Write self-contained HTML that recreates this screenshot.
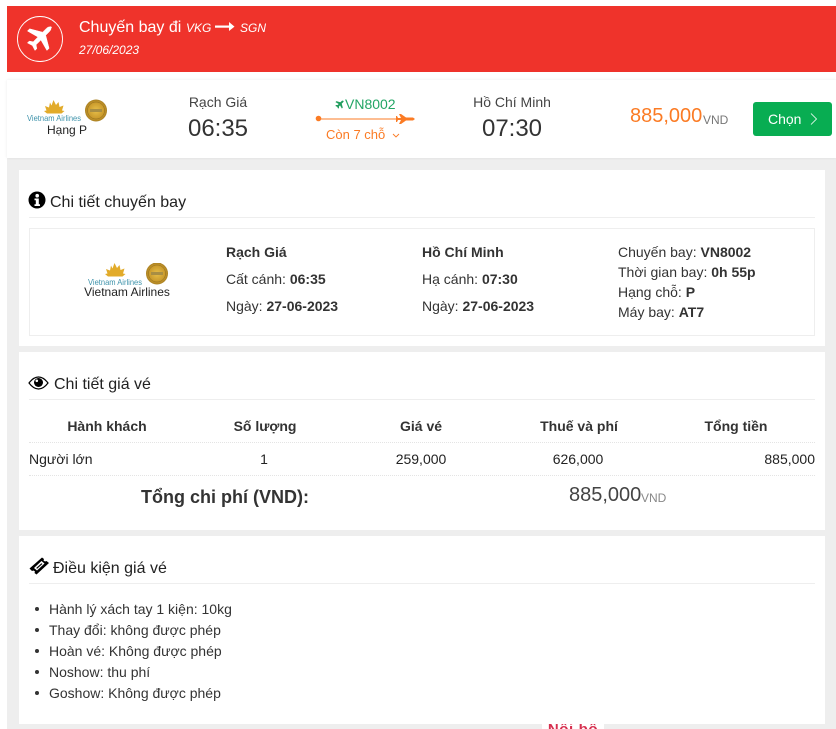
<!DOCTYPE html>
<html><head><meta charset="utf-8">
<style>
html,body{margin:0;padding:0;width:836px;height:729px;overflow:hidden;background:#fff}
body{position:relative;font-family:"Liberation Sans",Arial,sans-serif;color:#333;font-size:14px}
.a{position:absolute}
.t{position:absolute;white-space:nowrap;line-height:20px;height:20px}
.c{transform:translateX(-50%)}
.h{font-size:16px;color:#222}
.l{position:absolute;height:1px;background:#eee;left:29px;width:786px}
.d{position:absolute;left:29px;width:786px;border-top:1px dotted #e4e4e4}
b{color:#333}
</style></head><body>
<div class="a" style="left:7px;top:158px;width:829px;height:571px;background:#eeeeee"></div>
<div class="a" style="left:7px;top:6px;width:829px;height:66px;background:#ef332b"></div>
<div class="a" style="left:7px;top:80px;width:829px;height:78px;background:#fff;box-shadow:0 0 3px rgba(0,0,0,.08)"></div>
<svg class="a" style="left:17px;top:16px" width="46" height="46" viewBox="0 0 46 46">
<circle cx="23" cy="23" r="22.5" fill="none" stroke="#fff" stroke-width=".9"/>
<path fill="#fff" stroke="#fff" stroke-width=".5" d="M35 11.500c-1.600-1.200-4-.7-5.400.7l-4 4-13-3.400-2.200 2.200 10.500 6-4.700 4.800-4-.7-1.800 1.800 5 2.600 2.600 5 1.800-1.800-.7-4 4.800-4.700 6 10.500 2.200-2.200-3.400-13 4-4c1.300-1.400 2-3.600.7-4.800z"/>
</svg>
<span class="t" style="left:79px;top:18px;font-size:16px;color:#fff">Chuyến bay đi</span>
<span class="t" style="left:186px;top:18px;font-size:12px;font-style:italic;color:#fff">VKG</span>
<svg class="a" style="left:215px;top:21px" width="20" height="12" viewBox="0 0 20 12"><path d="M0 4.500h15v2.200H0z" fill="#fff"/><path d="M14 1l5.500 4.600L14 10z" fill="#fff"/></svg>
<span class="t" style="left:240px;top:18px;font-size:12px;font-style:italic;color:#fff">SGN</span>
<span class="t" style="left:79px;top:40px;font-size:12px;font-style:italic;color:#fff">27/06/2023</span>

<!-- logo 1 -->
<svg class="a" style="left:27px;top:98px" width="82" height="26" viewBox="0 0 82 26">
<defs><radialGradient id="g"><stop offset="0" stop-color="#e8c04a"/><stop offset=".75" stop-color="#c9992b"/><stop offset="1" stop-color="#a87f22"/></radialGradient></defs>
<path fill="#e2ab2a" d="M26.500 2l2.500 5 2.500-3 1 5 4-1.500-1.500 5 2.500.5-3 2.500H20l-3-2.500 2.500-.5L18 8l4 1.500 1-5 1.500 3z"/>
<text x="0" y="23" font-family="Liberation Sans" font-size="8.500" textLength="54" lengthAdjust="spacingAndGlyphs" fill="#3f93ab">Vietnam Airlines</text>
<circle cx="69" cy="12.500" r="11" fill="url(#g)"/><circle cx="69" cy="12.500" r="8.500" fill="none" stroke="#8b6a1c" stroke-width=".5"/><rect x="63" y="11" width="12" height="3" fill="#a88e44"/>
</svg>
<span class="t c" style="left:67px;top:120px;font-size:12px;color:#222">Hạng P</span>

<span class="t c" style="left:218px;top:92px;font-size:14px;color:#444">Rạch Giá</span>
<span class="t c" style="left:218px;top:119px;font-size:24px;color:#333">06:35</span>
<svg class="a" style="left:335px;top:100px" width="9" height="9" viewBox="0 0 24 24"><path fill="#1f9c5c" stroke="#1f9c5c" stroke-width="1.500" d="M22 3c-1-1-3-.6-4 .5l-3.500 3.500L4 4 2.500 5.500l8.500 5-4 4-3.500-.5L2 15.500l4.500 2 2 4.500 1.500-1.500-.5-3.500 4-4 5 8.500L20 20l-3-10.500L20.500 6c1-1 2.500-2 1.500-3z"/></svg>
<span class="t" style="left:345px;top:94px;font-size:14px;color:#22a565">VN8002</span>
<svg class="a" style="left:314px;top:112px" width="102" height="16" viewBox="0 0 102 16">
<circle cx="4.500" cy="6.500" r="2.800" fill="#fb7b24"/>
<path d="M6 7h85" stroke="#fb7b24" stroke-width="1"/>
<path fill="#fb7b24" d="M85 2h2l5 3.500h7l2 1.500-2 1.500h-7L87 12h-2l2-4h-3l-1 2h-1V4h1l1 2h3z"/>
</svg>
<span class="t" style="left:326px;top:125px;font-size:13px;color:#fb7b24">Còn 7 chỗ</span>
<svg class="a" style="left:392px;top:133px" width="8" height="6" viewBox="0 0 8 6"><path d="M1 1l3 3 3-3" fill="none" stroke="#fb7b24" stroke-width=".9"/></svg>
<span class="t c" style="left:512px;top:92px;font-size:14px;color:#444">Hồ Chí Minh</span>
<span class="t c" style="left:512px;top:119px;font-size:24px;color:#333">07:30</span>
<span class="t" style="left:630px;top:106px;font-size:20px;color:#fb7b24">885,000</span>
<span class="t" style="left:703px;top:110px;font-size:12px;color:#777">VND</span>
<div class="a" style="left:753px;top:102px;width:79px;height:34px;background:#08ad52;border-radius:3px"></div>
<span class="t" style="left:768px;top:109px;font-size:14px;color:#fff">Chọn</span>
<svg class="a" style="left:809px;top:112px" width="9" height="14" viewBox="0 0 9 14"><path d="M2 1.500l5.500 5.500L2 12.500" fill="none" stroke="#fff" stroke-width=".8"/></svg>

<!-- panel 1 -->
<div class="a" style="left:19px;top:170px;width:806px;height:176px;background:#fff"></div>
<svg class="a" style="left:28px;top:191px" width="18" height="18" viewBox="0 0 18 18"><circle cx="9" cy="9" r="8.500" fill="#000"/><circle cx="9.200" cy="4.700" r="1.800" fill="#fff"/><path fill="#fff" d="M6.500 7.500h4.300v5.800h1.200v1.700H6.500v-1.700h1.300V9.200H6.500z"/></svg>
<span class="t h" style="left:50px;top:193px">Chi tiết chuyến bay</span>
<div class="l" style="top:217px"></div>
<div class="a" style="left:29px;top:228px;width:784px;height:106px;border:1px solid #eee"></div>
<svg class="a" style="left:88px;top:263px" width="82" height="26" viewBox="0 0 82 26">
<path fill="#e2ab2a" d="M26.500 0l2.500 5 2.500-3 1 5 4-1.500-1.500 5 2.500.5-3 2.500H20l-3-2.500 2.500-.5L18 6l4 1.500 1-5 1.500 3z"/>
<text x="0" y="22" font-family="Liberation Sans" font-size="8.500" textLength="54" lengthAdjust="spacingAndGlyphs" fill="#3f93ab">Vietnam Airlines</text>
<circle cx="69" cy="10.500" r="11" fill="url(#g)"/><circle cx="69" cy="10.500" r="8.500" fill="none" stroke="#8b6a1c" stroke-width=".5"/><rect x="63" y="9" width="12" height="3" fill="#a88e44"/>
</svg>
<span class="t c" style="left:127px;top:282px;font-size:12px;color:#222">Vietnam Airlines</span>
<span class="t" style="left:226px;top:242px"><b>Rạch Giá</b></span>
<span class="t" style="left:226px;top:269px">Cất cánh: <b>06:35</b></span>
<span class="t" style="left:226px;top:296px">Ngày: <b>27-06-2023</b></span>
<span class="t" style="left:422px;top:242px"><b>Hồ Chí Minh</b></span>
<span class="t" style="left:422px;top:269px">Hạ cánh: <b>07:30</b></span>
<span class="t" style="left:422px;top:296px">Ngày: <b>27-06-2023</b></span>
<span class="t" style="left:618px;top:242px">Chuyến bay: <b>VN8002</b></span>
<span class="t" style="left:618px;top:262px">Thời gian bay: <b>0h 55p</b></span>
<span class="t" style="left:618px;top:282px">Hạng chỗ: <b>P</b></span>
<span class="t" style="left:618px;top:302px">Máy bay: <b>AT7</b></span>

<!-- panel 2 -->
<div class="a" style="left:19px;top:352px;width:806px;height:178px;background:#fff"></div>
<svg class="a" style="left:28px;top:375px" width="21" height="16" viewBox="0 0 21 16"><path d="M1 8C4 4 7 2 10.500 2S17 4 20 8c-3 4-6 6-9.500 6S4 12 1 8z" fill="#fff" stroke="#000" stroke-width="1.200"/><circle cx="10.500" cy="7.500" r="4.500" fill="#000"/><circle cx="8.800" cy="5.800" r="1.300" fill="#fff"/></svg>
<span class="t h" style="left:54px;top:375px">Chi tiết giá vé</span>
<div class="l" style="top:399px"></div>
<b class="t c" style="left:107px;top:416px">Hành khách</b>
<b class="t c" style="left:265px;top:416px">Số lượng</b>
<b class="t c" style="left:421px;top:416px">Giá vé</b>
<b class="t c" style="left:579px;top:416px">Thuế và phí</b>
<b class="t c" style="left:736px;top:416px">Tổng tiền</b>
<div class="d" style="top:442px"></div>
<span class="t" style="left:29px;top:449px;color:#222">Người lớn</span>
<span class="t c" style="left:264px;top:449px;color:#222">1</span>
<span class="t c" style="left:421px;top:449px;color:#222">259,000</span>
<span class="t c" style="left:578px;top:449px;color:#222">626,000</span>
<span class="t" style="right:21px;top:449px;color:#222">885,000</span>
<div class="d" style="top:475px"></div>
<b class="t c" style="left:225px;top:487px;font-size:18px">Tổng chi phí (VND):</b>
<span class="t" style="left:569px;top:485px;font-size:20px;color:#444">885,000</span>
<span class="t" style="left:641px;top:488px;font-size:12px;color:#888">VND</span>

<!-- panel 3 -->
<div class="a" style="left:19px;top:536px;width:806px;height:188px;background:#fff"></div>
<svg class="a" style="left:29px;top:557px" width="20" height="18" viewBox="0 0 20 18"><path d="M13 .5l2 1.500-.5 1.500 1.500 1 1.500-.5L20 6 7.500 17.500l-2-1.500.5-1.500-1.500-1-1.500.5L.5 11.500z" fill="#000"/><path d="M12.500 4l3 2.500-7.500 7-3-2.500z" fill="#fff"/><path d="M12.500 6.300l.9.700-5.300 4.700-.9-.7z" fill="#000"/></svg>
<span class="t h" style="left:53px;top:559px">Điều kiện giá vé</span>
<div class="l" style="top:583px"></div>
<div class="a" style="left:35px;top:607px;width:4px;height:4px;border-radius:50%;background:#333"></div>
<div class="a" style="left:35px;top:628px;width:4px;height:4px;border-radius:50%;background:#333"></div>
<div class="a" style="left:35px;top:649px;width:4px;height:4px;border-radius:50%;background:#333"></div>
<div class="a" style="left:35px;top:670px;width:4px;height:4px;border-radius:50%;background:#333"></div>
<div class="a" style="left:35px;top:691px;width:4px;height:4px;border-radius:50%;background:#333"></div>
<span class="t" style="left:49px;top:599px">Hành lý xách tay 1 kiện: 10kg</span>
<span class="t" style="left:49px;top:620px">Thay đổi: không được phép</span>
<span class="t" style="left:49px;top:641px">Hoàn vé: Không được phép</span>
<span class="t" style="left:49px;top:662px">Noshow: thu phí</span>
<span class="t" style="left:49px;top:683px">Goshow: Không được phép</span>

<div class="a" style="left:542px;top:724px;width:62px;height:5px;background:#fff;overflow:hidden">
<span class="t c" style="left:31px;top:-4px;font-size:15px;font-weight:bold;color:#d6304f;letter-spacing:.6px">Nội bộ</span>
</div>
</body></html>
